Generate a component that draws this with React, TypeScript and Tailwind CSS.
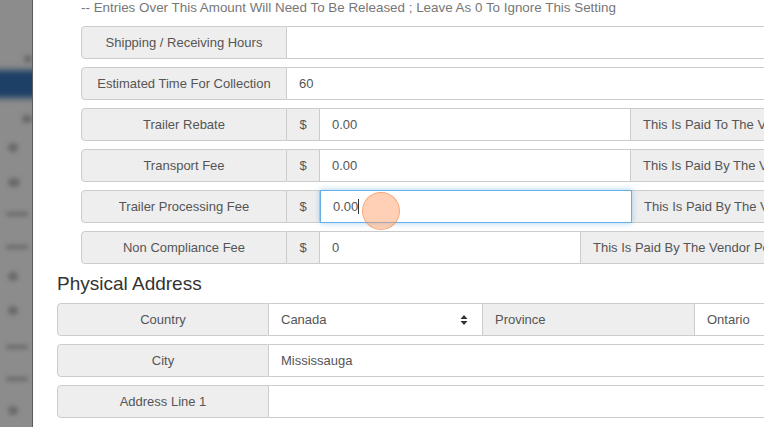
import React from "react";

const font = { fontFamily: '"Liberation Sans", Arial, sans-serif' };

function Label({ children, w }: { children: React.ReactNode; w: string }) {
  return (
    <div
      className={`${w} h-full shrink-0 flex items-center justify-center bg-[#eeeeee] border border-[#cccccc] rounded-l-[4px] text-[13px] text-[#555555]`}
    >
      {children}
    </div>
  );
}

function Dollar() {
  return (
    <div className="w-[33px] h-full shrink-0 flex items-center justify-center bg-[#eeeeee] border border-l-0 border-[#cccccc] text-[13px] text-[#555555]">
      $
    </div>
  );
}

function Addon({ children, left = false }: { children: React.ReactNode; left?: boolean }) {
  return (
    <div
      className={`h-full shrink-0 flex items-center bg-[#eeeeee] border border-l-0 border-[#cccccc] text-[13px] text-[#555555] whitespace-nowrap px-[12px] ${left ? "w-[212px]" : "w-[400px]"}`}
    >
      {children}
    </div>
  );
}

function Input({ value, w, focus = false }: { value?: string; w: string; focus?: boolean }) {
  return (
    <div
      className={`${w} h-full shrink-0 flex items-center bg-white border ${
        focus
          ? "border-[#66afe9] shadow-[0_0_6px_rgba(102,175,233,0.6)] relative z-10"
          : "border-l-0 border-[#cccccc]"
      } text-[13px] text-[#555555] px-[12px] whitespace-nowrap`}
    >
      {value}
      {focus && <span className="inline-block w-px h-[15px] bg-[#333]" />}
    </div>
  );
}

function Row({ children }: { children: React.ReactNode }) {
  return <div className="flex h-[33px] mb-[8px] w-[1000px]">{children}</div>;
}

function Sidebar() {
  const blobs = [
    { t: 55, l: 24, w: 8, h: 8 },
    { t: 115, l: 22, w: 10, h: 8 },
    { t: 143, l: 8, w: 10, h: 9 },
    { t: 178, l: 8, w: 12, h: 9 },
    { t: 212, l: 6, w: 22, h: 4 },
    { t: 245, l: 6, w: 22, h: 4 },
    { t: 272, l: 8, w: 10, h: 9 },
    { t: 306, l: 8, w: 10, h: 9 },
    { t: 345, l: 6, w: 22, h: 4 },
    { t: 377, l: 6, w: 22, h: 4 },
    { t: 406, l: 8, w: 10, h: 9 },
  ];
  return (
    <div className="relative w-[33px] h-full shrink-0 bg-[#8c8c8c] border-r border-[#5a5a5a] overflow-hidden">
      <div className="absolute left-[-10px] right-[-10px] top-[70px] h-[28px] bg-[#1d4166] blur-[3px]" />
      {blobs.map((b, i) => (
        <div
          key={i}
          className="absolute bg-[#6a6a6a] rounded-full blur-[2px]"
          style={{ top: b.t, left: b.l, width: b.w, height: b.h }}
        />
      ))}
    </div>
  );
}

export default function App() {
  return (
    <div className="w-[764px] h-[427px] overflow-hidden flex bg-white" style={font}>
      <Sidebar />
      <div className="relative flex-1 overflow-hidden">
        <div className="pl-[48px]">
          <div className="h-[26px] pt-[0px] text-[13.4px] leading-[16px] text-[#777777] whitespace-nowrap">
            -- Entries Over This Amount Will Need To Be Released ; Leave As 0 To Ignore This Setting
          </div>
          <Row>
            <Label w="w-[206px]">Shipping / Receiving Hours</Label>
            <Input w="w-[700px]" />
          </Row>
          <Row>
            <Label w="w-[206px]">Estimated Time For Collection</Label>
            <Input w="w-[700px]" value="60" />
          </Row>
          <Row>
            <Label w="w-[206px]">Trailer Rebate</Label>
            <Dollar />
            <Input w="w-[311px]" value="0.00" />
            <Addon>This Is Paid To The Vendor For Each Trailer</Addon>
          </Row>
          <Row>
            <Label w="w-[206px]">Transport Fee</Label>
            <Dollar />
            <Input w="w-[311px]" value="0.00" />
            <Addon>This Is Paid By The Vendor For Each Trailer</Addon>
          </Row>
          <Row>
            <Label w="w-[206px]">Trailer Processing Fee</Label>
            <Dollar />
            <Input w="w-[312px]" value="0.00" focus />
            <Addon>This Is Paid By The Vendor For Each Trailer</Addon>
          </Row>
          <Row>
            <Label w="w-[206px]">Non Compliance Fee</Label>
            <Dollar />
            <Input w="w-[261px]" value="0" />
            <Addon>This Is Paid By The Vendor Per Non Compliance</Addon>
          </Row>
        </div>
        <div className="pl-[24px]">
          <div className="text-[19px] leading-[24px] text-[#333333] mt-[3px] mb-[7px]">Physical Address</div>
          <Row>
            <Label w="w-[212px]">Country</Label>
            <div className="w-[214px] h-full shrink-0 flex items-center justify-between bg-white border border-l-0 border-[#cccccc] text-[13px] text-[#555555] pl-[12px] pr-[14px]">
              <span>Canada</span>
              <svg width="8" height="12" viewBox="0 0 8 12">
                <path d="M4 1 L7.5 5 H0.5 Z" fill="#333" />
                <path d="M4 11 L7.5 7 H0.5 Z" fill="#333" />
              </svg>
            </div>
            <Addon left>Province</Addon>
            <Input w="w-[300px]" value="Ontario" />
          </Row>
          <Row>
            <Label w="w-[212px]">City</Label>
            <Input w="w-[700px]" value="Mississauga" />
          </Row>
          <Row>
            <Label w="w-[212px]">Address Line 1</Label>
            <Input w="w-[700px]" />
          </Row>
        </div>
        <div className="absolute left-[329px] top-[192px] w-[38px] h-[38px] rounded-full bg-[rgba(255,150,90,0.45)] border border-[rgba(240,140,80,0.6)] z-20" />
      </div>
    </div>
  );
}
